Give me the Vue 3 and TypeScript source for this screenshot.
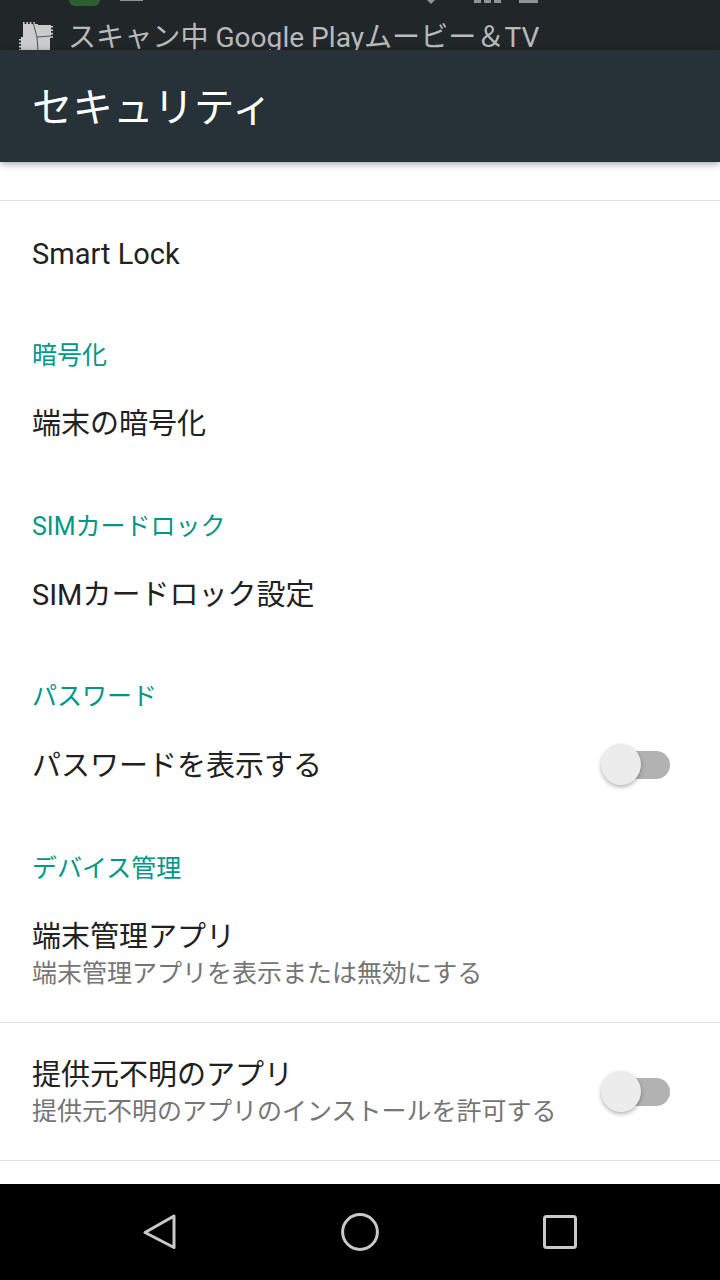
<script setup lang="ts">
interface Row {
  title: string
  sub?: string
  toggle?: boolean
}
interface Section {
  category: string
  row: Row
}
const sections: Section[] = [
  { category: '暗号化', row: { title: '端末の暗号化' } },
  { category: 'SIMカードロック', row: { title: 'SIMカードロック設定' } },
  { category: 'パスワード', row: { title: 'パスワードを表示する', toggle: true } }
]
</script>

<template>
  <div class="screen">
    <div class="status">
      <div class="peek">
        <span class="peek-green"></span>
        <span class="peek-bar"></span>
        <span class="peek-wifi"></span>
        <span class="peek-signal"></span>
        <span class="peek-battery"></span>
      </div>
      <div class="ticker">
        <svg class="scan" width="38" height="30" viewBox="0 0 38 30">
          <rect x="8" y="3" width="15" height="14" fill="#c9cbcc" />
          <rect x="21" y="4" width="15" height="13" fill="#c9cbcc" />
          <rect x="6" y="16" width="29" height="13" fill="#c9cbcc" />
          <path fill="none" stroke="#c9cbcc" stroke-width="2" stroke-dasharray="1.6 1.8" d="M8 2 H20" />
          <path fill="none" stroke="#c9cbcc" stroke-width="2" stroke-dasharray="1.6 1.8" d="M37 5 V17" />
          <path fill="none" stroke="#c9cbcc" stroke-width="2" stroke-dasharray="1.6 1.8" d="M5 18 V29" />
          <path fill="none" stroke="#41474b" stroke-width="0.9" d="M18 1.5 L22 16 L23 30 M22 16 L36 15" />
        </svg>
        <span class="ticker-text">スキャン中 Google Playムービー＆TV</span>
      </div>
    </div>

    <header class="appbar">セキュリティ</header>

    <main class="list">
      <div class="lead-space"></div>
      <div class="row row-smart">Smart Lock</div>

      <section v-for="s in sections" :key="s.category" class="section">
        <h2 class="category">{{ s.category }}</h2>
        <div class="row row-plain">
          <span class="row-label">{{ s.row.title }}</span>
          <span v-if="s.row.toggle" class="switch"><span class="thumb"></span></span>
        </div>
      </section>

      <h2 class="category device">デバイス管理</h2>
      <div class="row row-two row-first">
        <div class="texts">
          <div class="title">端末管理アプリ</div>
          <div class="sub">端末管理アプリを表示または無効にする</div>
        </div>
      </div>
      <div class="row row-two row-second">
        <div class="texts">
          <div class="title">提供元不明のアプリ</div>
          <div class="sub">提供元不明のアプリのインストールを許可する</div>
        </div>
        <span class="switch"><span class="thumb"></span></span>
      </div>
    </main>

    <nav class="navbar">
      <svg width="36" height="38" viewBox="0 0 36 38">
        <path d="M32 3.5 L3 20 L32 35 Z" transform="translate(0 -0.5)" fill="none" stroke="#c9c9c9" stroke-width="3" stroke-linejoin="round" />
      </svg>
      <svg width="40" height="40" viewBox="0 0 40 40">
        <circle cx="20" cy="20" r="17.4" fill="none" stroke="#c9c9c9" stroke-width="3" />
      </svg>
      <svg width="36" height="36" viewBox="0 0 36 36">
        <rect x="2.5" y="2.5" width="31" height="31" rx="2" fill="none" stroke="#c9c9c9" stroke-width="3" />
      </svg>
    </nav>
  </div>
</template>

<style scoped>
.screen {
  width: 720px;
  height: 1280px;
  display: flex;
  flex-direction: column;
  overflow: hidden;
  background: #fff;
  font-family: Roboto, "Noto Sans CJK JP", sans-serif;
}

.status {
  height: 50px;
  flex: none;
  background: #212629;
  overflow: hidden;
}
.peek {
  height: 21px;
  display: flex;
  align-items: flex-start;
}
.peek-green {
  width: 31px;
  height: 6px;
  margin-left: 69px;
  background: #2b5f32;
  border-radius: 0 0 14px 14px;
}
.peek-bar {
  width: 23px;
  height: 1px;
  margin-left: 20px;
  background: #8f9396;
}
.peek-wifi {
  width: 0;
  height: 0;
  margin-left: 284px;
  border-left: 4px solid transparent;
  border-right: 4px solid transparent;
  border-top: 4px solid #8f9396;
}
.peek-signal {
  width: 29px;
  height: 3px;
  margin-left: 39px;
  background: repeating-linear-gradient(90deg, #8f9396 0 7px, transparent 7px 10px);
}
.peek-battery {
  width: 19px;
  height: 3px;
  margin-left: 16px;
  background: #8f9396;
}
.ticker {
  display: flex;
  align-items: flex-start;
  padding-left: 15px;
}
.scan {
  flex: none;
  display: block;
}
.ticker-text {
  margin-left: 15px;
  padding-top: 1px;
  font-size: 28.1px;
  line-height: 32px;
  color: #b7babb;
  white-space: nowrap;
}

.appbar {
  position: relative;
  z-index: 1;
  height: 112px;
  flex: none;
  padding: 0 0 4px 32px;
  box-sizing: border-box;
  display: flex;
  align-items: center;
  background: #263238;
  color: #fff;
  font-size: 40.5px;
  box-shadow: 0 2px 7px rgba(0, 0, 0, 0.35);
}

.list {
  flex: 1;
  min-height: 0;
  overflow: hidden;
}
.lead-space {
  height: 38px;
  border-bottom: 1px solid #e2e2e2;
}
.row {
  display: flex;
  justify-content: space-between;
  padding: 0 50px 0 32px;
  color: #212121;
  font-size: 29px;
  line-height: 40px;
  box-sizing: border-box;
}
.row-smart {
  height: 122px;
  padding-top: 33px;
}
.section {
  height: 170.6px;
}
.category {
  margin: 0;
  height: 64px;
  padding: 15px 0 0 32px;
  box-sizing: border-box;
  font-size: 25px;
  line-height: 36px;
  font-weight: 400;
  color: #009688;
}
.device {
  padding-top: 16px;
}
.row-plain {
  height: 106px;
  padding-top: 17px;
}
.section:last-of-type .row-label {
  padding-top: 1px;
}
.row-two {
  border-bottom: 1px solid #e2e2e2;
}
.row-first {
  height: 124px;
  padding-top: 18px;
}
.row-second {
  height: 138px;
  padding-top: 32px;
}
.title {
  height: 39px;
  line-height: 40px;
}
.sub {
  font-size: 25px;
  line-height: 36px;
  color: #757575;
  white-space: nowrap;
}
.switch {
  position: relative;
  flex: none;
  width: 67px;
  height: 28px;
  margin-top: 6px;
  border-radius: 14px;
  background: #b2b2b2;
}
.row-second .switch {
  margin-top: 23px;
}
.thumb {
  position: absolute;
  left: -2px;
  top: -7px;
  width: 40px;
  height: 41px;
  border-radius: 50%;
  background: #ececec;
  box-shadow: 0 2px 4px rgba(0, 0, 0, 0.3);
}

.navbar {
  height: 96px;
  flex: none;
  box-sizing: border-box;
  padding-left: 142px;
  display: flex;
  align-items: center;
  background: #000;
}
.navbar svg {
  display: block;
  flex: none;
}
.navbar svg:nth-child(2) {
  margin-left: 162px;
}
.navbar svg:nth-child(3) {
  margin-left: 162px;
}
</style>
